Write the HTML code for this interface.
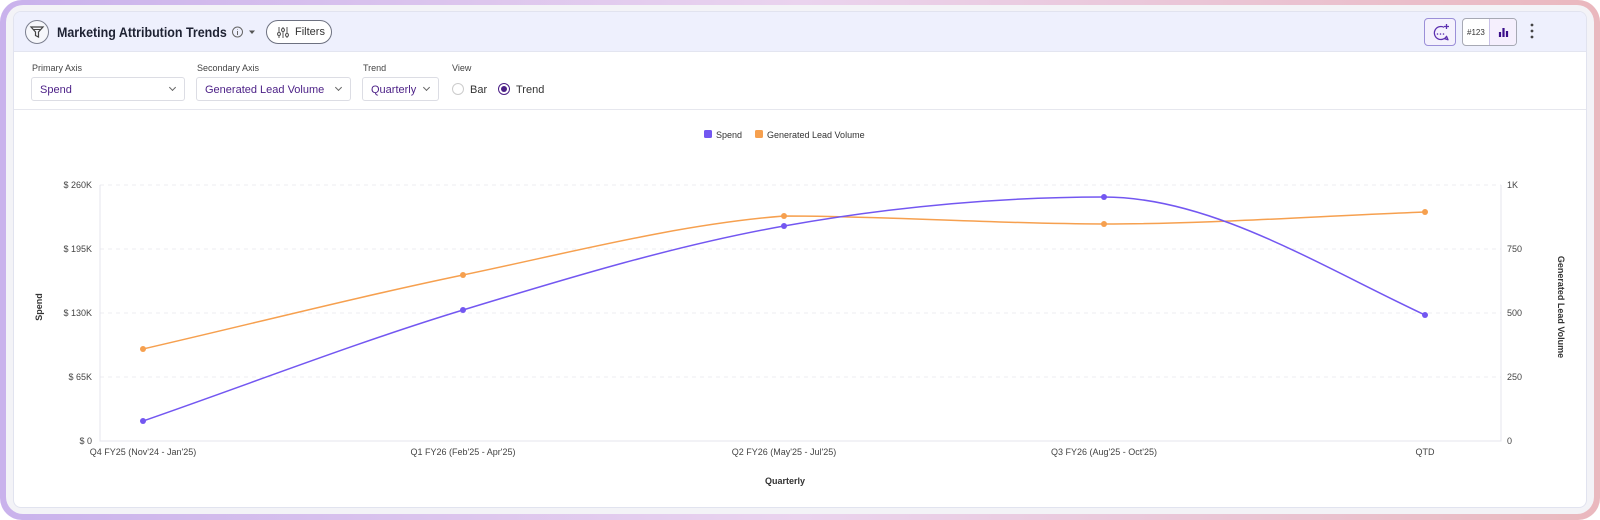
<!DOCTYPE html>
<html><head><style>
*{box-sizing:border-box;margin:0;padding:0}
body{width:1600px;height:520px;font-family:"Liberation Sans",sans-serif;background:#fff;overflow:hidden}
.outer{position:absolute;left:0;top:0;width:1600px;height:520px;border-radius:22px;background:linear-gradient(90deg,#c9b2ec,#ead3ee 50%,#eab8be)}
.band{position:absolute;left:6px;top:5px;right:6px;bottom:6px;border-radius:17px;background:#f3f3f7}
.card{position:absolute;left:13px;top:11px;right:13px;bottom:12px;border-radius:8px;background:#fff;border:1px solid #e1e3ef;overflow:hidden}
.hdr{height:40px;background:#eef0fd;border-bottom:1px solid #e3e5f0;position:relative}
.fun{position:absolute;left:11px;top:8px;width:24px;height:24px;border:1px solid #7b7f8e;border-radius:50%;background:#f6f7fb}
.title{position:absolute;left:43px;top:12px;font-size:14px;font-weight:bold;color:#1e2233;transform:scaleX(0.89);transform-origin:left;white-space:nowrap}
.filt{position:absolute;left:252px;top:8px;width:66px;height:24px;border:1px solid #6d7180;border-radius:12px;font-size:11px;color:#333;padding:5px 0 0 28px;background:#fff}
.lbl{position:absolute;font-size:9px;color:#444}
.sel{position:absolute;top:65px;height:24px;border:1px solid #dcdde4;border-radius:3px;font-size:11px;color:#4b1f86;padding:6px 0 0 8px}
.sel:after{content:"";position:absolute;right:9px;top:7px;width:4px;height:4px;border-right:1px solid #666;border-bottom:1px solid #666;transform:rotate(45deg)}
.btn{position:absolute;top:6px;height:28px;border:1px solid #9b8fd8;border-radius:4px;overflow:hidden}
</style></head><body>
<div class="outer"><div class="band"></div></div>
<div class="card">
 <div class="hdr">
  <div class="fun"><svg width="22" height="22" viewBox="0 0 22 22"><path d="M5 6h12l-4.5 5v5l-3 -1.5v-3.5z" fill="none" stroke="#444" stroke-width="1.2"/><path d="M7 8.5h8" stroke="#444"/></svg></div>
  <div class="title">Marketing Attribution Trends</div>
  <svg style="position:absolute;left:218px;top:14px" width="24" height="12"><circle cx="5.5" cy="6" r="5" fill="none" stroke="#666"/><path d="M5.5 5v4M5.5 3.2v.6" stroke="#666"/><path d="M17 4.5h6l-3 3.5z" fill="#555"/></svg>
  <div class="filt"><svg style="position:absolute;left:9px;top:5px" width="14" height="13"><path d="M3 1v11M7 1v11M11 1v11" stroke="#555"/><circle cx="3" cy="8" r="1.5" fill="#fff" stroke="#555"/><circle cx="7" cy="4" r="1.5" fill="#fff" stroke="#555"/><circle cx="11" cy="9" r="1.5" fill="#fff" stroke="#555"/></svg>Filters</div>
  <div class="btn" style="left:1410px;width:32px;background:#f4f1fd"><svg width="32" height="28"><path d="M19 8.3a6.5 6.5 0 1 0 2.5 9l1.5 3.5l-3.5-1.2" fill="none" stroke="#5b2fb0" stroke-width="1.3" stroke-linejoin="round"/><circle cx="12.5" cy="15" r=".8" fill="#5b2fb0"/><circle cx="15.5" cy="15" r=".8" fill="#5b2fb0"/><circle cx="18.5" cy="15" r=".8" fill="#5b2fb0"/><path d="M21.5 5v5M19 7.5h5" stroke="#5b2fb0" stroke-width="1.3"/></svg></div>
  <div class="btn" style="left:1448px;width:55px;border-color:#a7a9b4;background:#fff"><span style="position:absolute;left:4px;top:9px;font-size:8px;color:#333">#123</span><div style="position:absolute;left:26px;top:0;width:27px;height:26px;background:#f5effd;border-left:1px solid #c9c1e8"><svg width="27" height="26"><path d="M10 18v-5M13.5 18v-9M17 18v-6" stroke="#3b0f8a" stroke-width="2.2"/></svg></div></div>
  <svg style="position:absolute;left:1515px;top:10px" width="6" height="20"><circle cx="3" cy="3" r="1.4" fill="#444"/><circle cx="3" cy="9" r="1.4" fill="#444"/><circle cx="3" cy="15" r="1.4" fill="#444"/></svg>
 </div>
 <div class="lbl" style="left:18px;top:51px">Primary Axis</div>
 <div class="lbl" style="left:183px;top:51px">Secondary Axis</div>
 <div class="lbl" style="left:349px;top:51px">Trend</div>
 <div class="lbl" style="left:438px;top:51px">View</div>
 <div class="sel" style="left:17px;width:154px">Spend</div>
 <div class="sel" style="left:182px;width:155px">Generated Lead Volume</div>
 <div class="sel" style="left:348px;width:77px">Quarterly</div>
 <svg style="position:absolute;left:437px;top:69px" width="100" height="16"><circle cx="7" cy="8" r="5.5" fill="#fff" stroke="#ccc"/><text x="19" y="12" font-size="11" fill="#333" font-family="Liberation Sans">Bar</text><circle cx="53" cy="8" r="5.5" fill="#fff" stroke="#4b1f86"/><circle cx="53" cy="8" r="3" fill="#4b1f86"/><text x="65" y="12" font-size="11" fill="#333" font-family="Liberation Sans">Trend</text></svg>
 <div style="position:absolute;left:0;right:0;top:97px;border-top:1px solid #e6e7ee"></div>
</div>
<svg style="position:absolute;left:0;top:0" width="1600" height="520" font-family="Liberation Sans">
 <rect x="704" y="130" width="8" height="8" rx="1.5" fill="#7357f1"/><text x="716" y="138" font-size="9" fill="#333">Spend</text>
 <rect x="755" y="130" width="8" height="8" rx="1.5" fill="#f6a04f"/><text x="767" y="138" font-size="9" fill="#333">Generated Lead Volume</text>
 <g stroke="#ececf2" stroke-dasharray="4 4"><path d="M100 185H1501M100 249H1501M100 313H1501M100 377H1501"/></g>
 <path d="M100 185V441H1501V185" fill="none" stroke="#e4e5ec"/>
 <g font-size="9" fill="#444" text-anchor="end"><text x="92" y="188">$ 260K</text><text x="92" y="252">$ 195K</text><text x="92" y="316">$ 130K</text><text x="92" y="380">$ 65K</text><text x="92" y="444">$ 0</text></g>
 <g font-size="9" fill="#444"><text x="1507" y="188">1K</text><text x="1507" y="252">750</text><text x="1507" y="316">500</text><text x="1507" y="380">250</text><text x="1507" y="444">0</text></g>
 <g font-size="9" fill="#444" text-anchor="middle"><text x="143" y="455">Q4 FY25 (Nov'24 - Jan'25)</text><text x="463" y="455">Q1 FY26 (Feb'25 - Apr'25)</text><text x="784" y="455">Q2 FY26 (May'25 - Jul'25)</text><text x="1104" y="455">Q3 FY26 (Aug'25 - Oct'25)</text><text x="1425" y="455">QTD</text>
 <text x="785" y="484" font-weight="bold" fill="#333">Quarterly</text></g>
 <text transform="translate(42,307) rotate(-90)" font-size="9" font-weight="bold" fill="#333" text-anchor="middle">Spend</text>
 <text transform="translate(1558,307) rotate(90)" font-size="9" font-weight="bold" fill="#333" text-anchor="middle">Generated Lead Volume</text>
 <path d="M143 349C249.7 324.4 356.3 297.2 463 275C569.7 252.8 677.3 224.5 784 216C890.7 216 997.3 224 1104 224C1210.7 224 1318.3 216 1425 212" fill="none" stroke="#f6a04f" stroke-width="1.5"/>
 <path d="M143 421C249.7 384 356.3 342.5 463 310C569.7 277.5 677.3 244.9 784 226C890.7 207.1 997.3 197 1104 197C1210.7 197 1318.3 265 1425 315" fill="none" stroke="#7357f1" stroke-width="1.5"/>
 <g fill="#f6a04f"><circle cx="143" cy="349" r="3"/><circle cx="463" cy="275" r="3"/><circle cx="784" cy="216" r="3"/><circle cx="1104" cy="224" r="3"/><circle cx="1425" cy="212" r="3"/></g>
 <g fill="#7357f1"><circle cx="143" cy="421" r="3"/><circle cx="463" cy="310" r="3"/><circle cx="784" cy="226" r="3"/><circle cx="1104" cy="197" r="3"/><circle cx="1425" cy="315" r="3"/></g>
</svg>
</body></html>
